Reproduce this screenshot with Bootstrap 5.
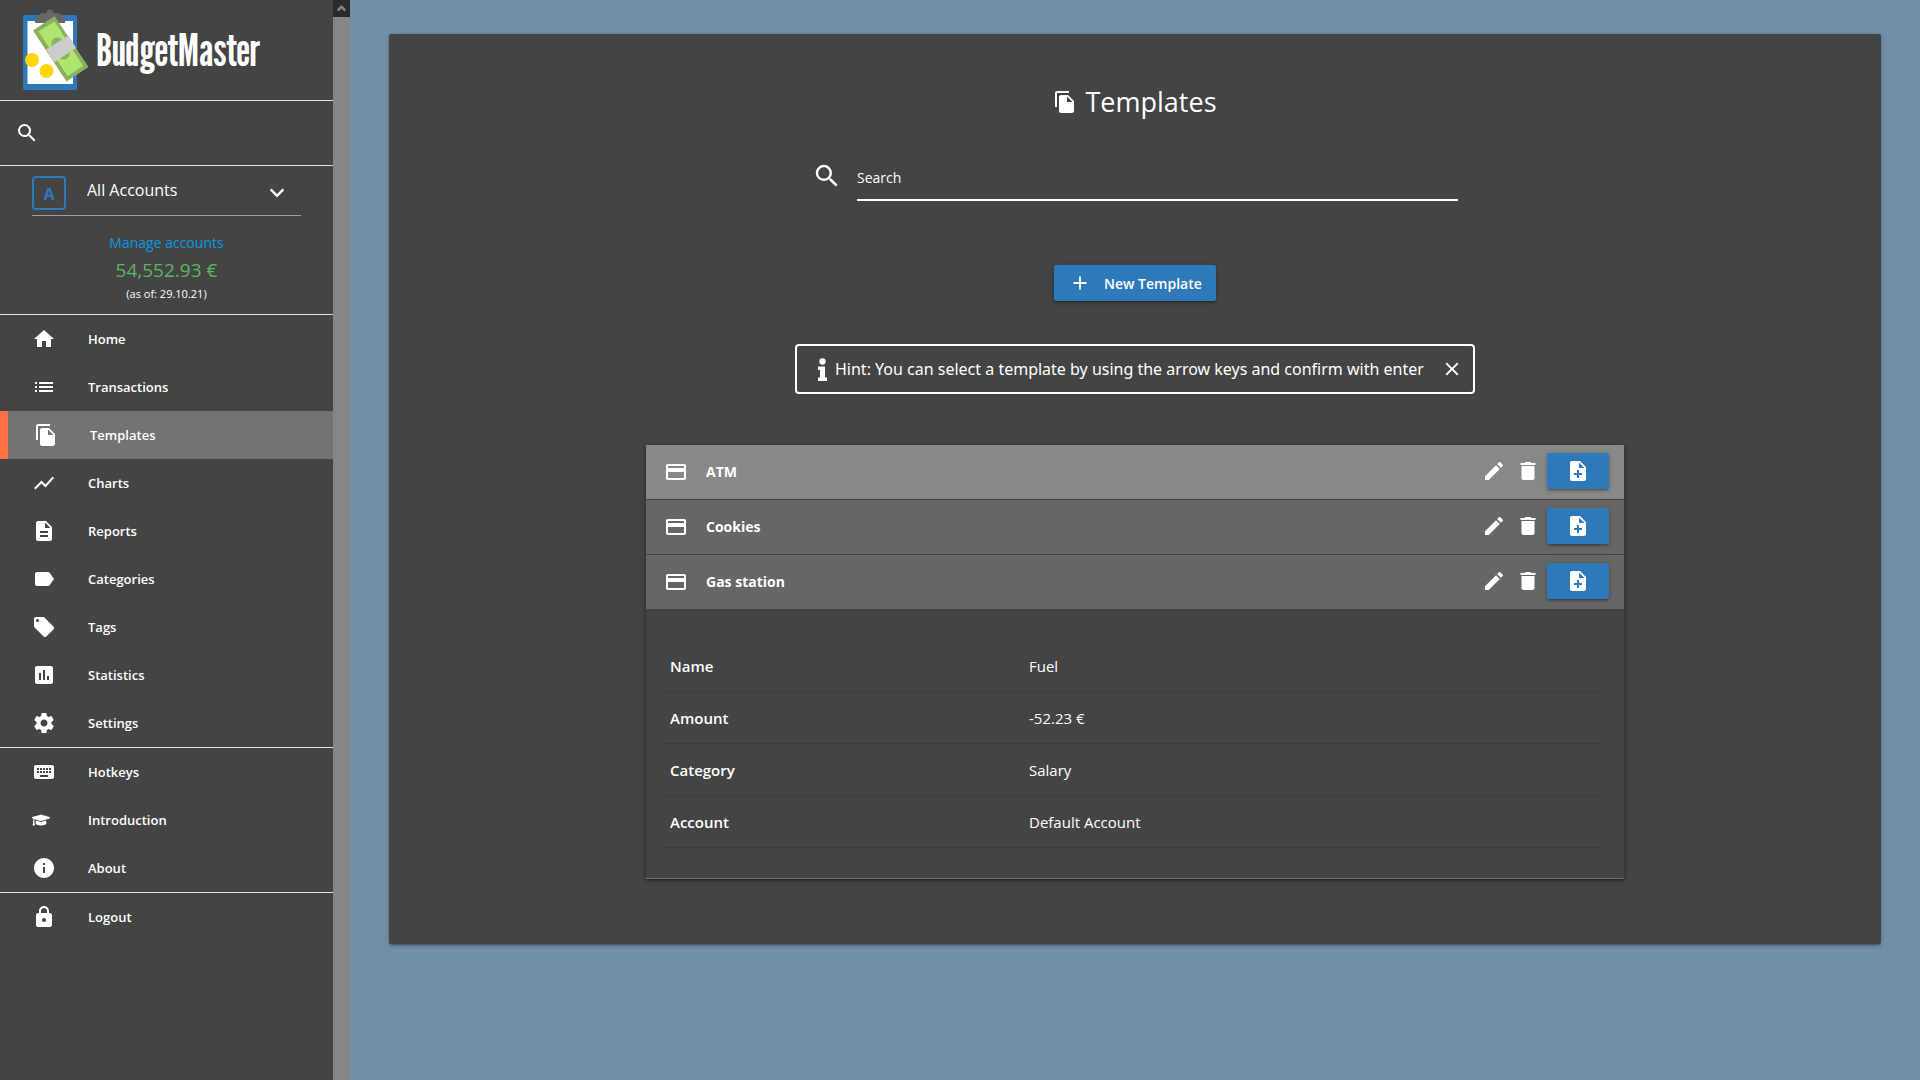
<!DOCTYPE html>
<html lang="en">
<head>
<meta charset="utf-8">
<meta name="viewport" content="width=device-width, initial-scale=1">
<title>BudgetMaster - Templates</title>
<link href="https://cdn.jsdelivr.net/npm/bootstrap@5.3.0/dist/css/bootstrap.min.css" rel="stylesheet">
<style>
:root{--bm-dark:#444;--bm-blue:#2e79b9;--bm-line:#e0e0e0}
body{background:#728fa8;color:#fff;font-family:"Open Sans","Noto Sans",sans-serif;font-size:14px;line-height:20px}
svg{display:block;flex:none;fill:currentColor}
.icon{width:24px;height:24px}
.sidebar{width:350px;background:var(--bm-dark)}
.sidebar-body{min-width:0}
.scroll-track{width:17px;background:#868686}
.scroll-up{height:17px;background:#2b2b2b;color:#868686}
.line-below{border-bottom:1px solid var(--bm-line)}
.brand{height:101px;padding-left:20px;color:#fff}
.brand-logo{width:72px;height:84px}
.brand-name{font-family:"League Gothic","Open Sans Condensed","Roboto Condensed","Liberation Sans Narrow","Liberation Sans",sans-serif;font-size:44px;font-weight:400;line-height:48px}
.quick-search{height:65px;padding:0 16px 0 15px}
.plain-input{background:transparent;border:0;color:#fff;outline:0;border-radius:0}
.account{height:149px;padding:10px 32px 0}
.account-select{height:40px;border-bottom:1px solid #9e9e9e;padding-right:12px}
.account-letter{width:34px;height:34px;border:2px solid var(--bm-blue);border-radius:4px;color:var(--bm-blue);font-size:16px;font-weight:700;padding-top:2px}
.account-select select{appearance:none;font-size:16px;padding:0;margin-left:21px}
.account-select .icon{margin-top:5px}
.account-link{color:#039be5;margin-top:17px}
.account-sum{color:#5cb860;font-size:19px;line-height:28px;margin-top:3px}
.account-date{font-size:11px;line-height:16px;margin-top:2px}
.nav-side a{height:48px;padding-left:32px;color:#fff;font-size:13px;font-weight:600;text-decoration:none;gap:32px}
.nav-side a:hover{background:#555}
.nav-side a.current{background:#737373;border-left:8px solid #ff7043;padding-left:26px}
.nav-side .cap{width:18px;height:18px;margin-right:6px}
.panel{width:95%;background:var(--bm-dark);border-radius:2px;box-shadow:0 2px 2px rgba(0,0,0,.14),0 3px 1px -2px rgba(0,0,0,.12),0 1px 5px rgba(0,0,0,.2);margin-top:34px;padding:48px 0 65px}
.panel h1{font-size:27px;line-height:40px;font-weight:400;gap:8px;margin-bottom:32px}
.search-box{width:646px;gap:15px;margin-bottom:64px;height:47px}
.search-box svg{width:30px;height:30px;margin-top:7px}
.search-box .plain-input{height:47px;border-bottom:2px solid #fff;padding:2px 0 0;font-size:14px}
.plain-input::placeholder{color:#fff;opacity:1}
.btn-bm{background:var(--bm-blue);color:#fff;border:0;border-radius:2px;height:36px;box-shadow:0 2px 2px rgba(0,0,0,.14),0 3px 1px -2px rgba(0,0,0,.12),0 1px 5px rgba(0,0,0,.2)}
.btn-bm:hover{background:#3d8acb;color:#fff}
.btn-new{font-size:14px;font-weight:600;padding:0 15px;gap:13px;width:162px}
.btn-new svg{width:22px;height:22px}
.hint{border:2px solid #fff;border-radius:4px;height:50px;font-family:"Noto Sans",sans-serif;font-size:16px;width:680px;margin-top:43px;margin-bottom:51px;padding:0 10px 0 21px}
.hint-info{width:9px;height:23px}
.btn-plain{background:none;border:0;padding:0;color:#fff}
.template-list{width:978px;box-shadow:0 2px 2px rgba(0,0,0,.14),0 3px 1px -2px rgba(0,0,0,.12),0 1px 5px rgba(0,0,0,.4);border-bottom:1px solid #707070}
.template-head{background:#666;height:54px;padding:0 15px 0 18px;gap:18px;font-size:14px;font-weight:700}
.template-head.selected{background:#888}
.template-head + .template-head{margin-top:1px}
.template-head .actions{gap:10px;padding-bottom:2px}
.template-head .btn-bm{width:62px;margin-left:-3px}
.detail{padding:30px 19px}
.detail table{font-size:15px;color:#fff}
.detail th,.detail td{height:52px;padding:2px 5px 0;border-bottom:1px solid #3c3c3c;vertical-align:middle;text-align:left}
.detail th{width:359px;font-weight:600}
</style>
</head>
<body>
<svg class="d-none" aria-hidden="true">
<symbol id="i-search" viewBox="0 0 24 24"><path d="M15.5 14h-.79l-.28-.27A6.47 6.47 0 0 0 16 9.5 6.5 6.5 0 1 0 9.5 16c1.61 0 3.09-.59 4.23-1.57l.27.28v.79l5 4.99L20.49 19l-4.99-5zm-6 0C7.01 14 5 11.99 5 9.5S7.01 5 9.5 5 14 7.01 14 9.5 11.99 14 9.5 14z"/></symbol>
<symbol id="i-copy" viewBox="0 0 24 24"><path d="M16 1H4c-1.1 0-2 .9-2 2v14h2V3h12V1zm-1 4l6 6v10c0 1.1-.9 2-2 2H7.99C6.89 23 6 22.1 6 21V7c0-1.1.89-2 1.99-2H15zm-1 7h5.500L14 6.500V12z"/></symbol>
<symbol id="i-card" viewBox="0 0 24 24"><path d="M20 4H4c-1.11 0-1.99.89-1.990 2L2 18c0 1.110.89 2 2 2h16c1.110 0 2-.89 2-2V6c0-1.110-.89-2-2-2zm0 14H4v-6h16v6zm0-10H4V6h16v2z"/></symbol>
<symbol id="i-edit" viewBox="0 0 24 24"><path d="M3 17.250V21h3.750L17.810 9.940l-3.750-3.750L3 17.250zM20.710 7.040c.39-.39.39-1.020 0-1.410l-2.340-2.340c-.39-.39-1.020-.39-1.410 0l-1.830 1.830 3.750 3.750 1.830-1.830z"/></symbol>
<symbol id="i-trash" viewBox="0 0 24 24"><path d="M5.500 19c0 1.100.9 2 2 2h9c1.100 0 2-.9 2-2V7h-13v12zM19.500 4h-4l-1-1h-5l-1 1h-4v2h15V4z"/></symbol>
<symbol id="i-add-file" viewBox="0 0 24 24"><path fill-rule="evenodd" d="M14 2H6c-1.100 0-1.990.9-1.990 2L4 20c0 1.100.89 2 1.990 2H18c1.100 0 2-.9 2-2V8l-6-6zm2 14h-3v3h-2v-3H8v-2h3v-3h2v3h3v2zm-3-7V3.500L18.500 9H13z"/></symbol>
</svg>
<div class="d-flex min-vh-100">
<aside class="sidebar d-flex flex-shrink-0">
<div class="sidebar-body flex-grow-1">
<a href="#" class="brand line-below d-flex align-items-center text-decoration-none">
<svg class="brand-logo" viewBox="20 8 72 84" aria-hidden="true">
<rect x="23" y="15" width="54" height="75" rx="2" fill="#2e79b9"/><path fill="#fff" d="M27.500 21h45.500v63H27.500z"/>
<path fill="#666" d="M35 23v-2c1-4 4-7 8-8h3.500a3.500 3.500 0 0 1 7 0H57c4 1 7 4 8 8v2z"/>
<path fill="#8bb05c" d="M54.500 16 33 30.500 66.500 81.500 88.500 67z"/><path fill="#aee571" d="M54.500 21.500 38.500 31.500 67.500 76 83 66z"/>
<ellipse cx="60.500" cy="48.500" rx="7.500" ry="12" fill="#8bb05c" transform="rotate(-33 60.500 48.500)"/>
<path fill="#ccc" d="M46 49.500 68.500 35.500 76 48 54 62.500z"/>
<circle cx="32" cy="60" r="7" fill="#ffd60a"/><circle cx="46.500" cy="71" r="7" fill="#ffd60a"/>
</svg>
<span class="brand-name ms-1">BudgetMaster</span></a>
<form class="quick-search line-below d-flex align-items-center"><label for="quick"><svg class="icon" role="img" aria-label="Search transactions"><use href="#i-search"/></svg></label><input id="quick" type="search" class="plain-input flex-grow-1"></form>
<section class="account line-below text-center">
<div class="account-select d-flex">
<label for="acc" class="account-letter d-flex align-items-center justify-content-center">A</label>
<select id="acc" class="plain-input flex-grow-1 mb-2 pb-1"><option>All Accounts</option></select>
<svg class="icon" viewBox="0 0 24 24" aria-hidden="true"><path d="M6.500 7.500 12 13 17.500 7.500 19.200 9.200 12 16.500 4.800 9.200z"/></svg>
</div>
<a href="#" class="account-link d-block text-decoration-none">Manage accounts</a>
<div class="account-sum">54,552.93 €</div>
<div class="account-date">(as of: 29.10.21)</div>
</section>
<nav class="nav-side">
<div class="line-below">
<a href="#" class="d-flex align-items-center"><svg class="icon" viewBox="0 0 24 24"><path d="M10 20v-6h4v6h5v-8h3L12 3 2 12h3v8z"/></svg>Home</a>
<a href="#" class="d-flex align-items-center"><svg class="icon" viewBox="0 0 24 24"><path d="M3 13h2v-2H3v2zm0 4h2v-2H3v2zm0-8h2V7H3v2zm4 4h14v-2H7v2zm0 4h14v-2H7v2zM7 7v2h14V7H7z"/></svg>Transactions</a>
<a href="#" class="current d-flex align-items-center" aria-current="page"><svg class="icon"><use href="#i-copy"/></svg>Templates</a>
<a href="#" class="d-flex align-items-center"><svg class="icon" viewBox="0 0 24 24"><path d="M3.500 18.490l6-6.010 4 4L22 6.920l-1.410-1.410-7.090 7.970-4-4L2 16.990z"/></svg>Charts</a>
<a href="#" class="d-flex align-items-center"><svg class="icon" viewBox="0 0 24 24"><path fill-rule="evenodd" d="M14 2H6c-1.100 0-1.990.9-1.990 2L4 20c0 1.100.89 2 1.990 2H18c1.100 0 2-.9 2-2V8l-6-6zm2 16H8v-2h8v2zm0-4H8v-2h8v2zm-3-5V3.500L18.500 9H13z"/></svg>Reports</a>
<a href="#" class="d-flex align-items-center"><svg class="icon" viewBox="0 0 24 24"><path d="M17.630 5.840C17.270 5.330 16.670 5 16 5L5 5.010C3.900 5.010 3 5.900 3 7v10c0 1.100.9 1.990 2 1.990L16 19c.67 0 1.270-.33 1.630-.84L22 12l-4.370-6.160z"/></svg>Categories</a>
<a href="#" class="d-flex align-items-center"><svg class="icon" viewBox="0 0 24 24"><path fill-rule="evenodd" d="M21.410 11.580l-9-9C12.050 2.220 11.550 2 11 2H4c-1.100 0-2 .9-2 2v7c0 .55.22 1.050.59 1.420l9 9c.36.36.86.58 1.410.58s1.050-.22 1.410-.59l7-7c.37-.36.59-.86.59-1.410s-.23-1.060-.59-1.420zM5.500 7C4.670 7 4 6.330 4 5.500S4.670 4 5.500 4 7 4.670 7 5.500 6.330 7 5.500 7z"/></svg>Tags</a>
<a href="#" class="d-flex align-items-center"><svg class="icon" viewBox="0 0 24 24"><path fill-rule="evenodd" d="M19 3H5c-1.100 0-2 .9-2 2v14c0 1.100.9 2 2 2h14c1.100 0 2-.9 2-2V5c0-1.100-.9-2-2-2zM9 17H7v-7h2v7zm4 0h-2V7h2v10zm4 0h-2v-4h2v4z"/></svg>Statistics</a>
<a href="#" class="d-flex align-items-center"><svg class="icon" viewBox="0 0 24 24"><path fill-rule="evenodd" d="M19.430 12.980c.04-.32.07-.64.07-.98s-.03-.66-.07-.98l2.110-1.650c.19-.15.24-.42.12-.64l-2-3.460c-.12-.22-.39-.3-.61-.22l-2.490 1c-.52-.4-1.080-.73-1.690-.98l-.38-2.650C14.460 2.180 14.250 2 14 2h-4c-.25 0-.46.18-.49.42l-.38 2.650c-.61.25-1.170.59-1.690.98l-2.490-1c-.23-.09-.49 0-.61.22l-2 3.460c-.13.22-.07.49.12.64l2.110 1.650c-.04.32-.07.65-.07.98s.03.66.07.98l-2.110 1.650c-.19.15-.24.42-.12.64l2 3.460c.12.22.39.3.61.22l2.490-1c.52.4 1.080.73 1.690.98l.38 2.650c.03.24.24.42.49.42h4c.25 0 .46-.18.49-.42l.38-2.650c.61-.25 1.170-.59 1.690-.98l2.490 1c.23.09.49 0 .61-.22l2-3.460c.12-.22.07-.49-.12-.64l-2.110-1.650zM12 15.500c-1.930 0-3.500-1.570-3.500-3.500s1.570-3.500 3.500-3.500 3.500 1.570 3.500 3.500-1.570 3.500-3.500 3.500z"/></svg>Settings</a>
</div>
<div class="line-below">
<a href="#" class="d-flex align-items-center"><svg class="icon" viewBox="0 0 24 24"><path fill-rule="evenodd" d="M20 5H4c-1.100 0-1.990.9-1.990 2L2 17c0 1.100.9 2 2 2h16c1.100 0 2-.9 2-2V7c0-1.100-.9-2-2-2zm-9 3h2v2h-2V8zm0 3h2v2h-2v-2zM8 8h2v2H8V8zm0 3h2v2H8v-2zm-1 2H5v-2h2v2zm0-3H5V8h2v2zm9 7H8v-2h8v2zm0-4h-2v-2h2v2zm0-3h-2V8h2v2zm3 3h-2v-2h2v2zm0-3h-2V8h2v2z"/></svg>Hotkeys</a>
<a href="#" class="d-flex align-items-center"><svg class="cap" viewBox="0 0 640 512"><path d="M622 153 343 67c-15-4-31-4-46 0L18 153c-24 7-24 40 0 48l49 15c-11 13-17 29-18 46-10 6-17 16-17 29 0 11 6 21 14 27L20 432c-2 10 6 19 16 19h56c10 0 18-9 16-19L82 318c8-6 14-16 14-27 0-12-7-22-16-28 1-13 7-25 19-33l198 61c9 3 26 6 46 0l279-85c24-8 24-41 0-48zM353 321c-31 10-56 4-66 0l-145-44-14 107c0 35 86 64 192 64s192-29 192-64l-14-107z"/></svg>Introduction</a>
<a href="#" class="d-flex align-items-center"><svg class="icon" viewBox="0 0 24 24"><path fill-rule="evenodd" d="M12 2C6.480 2 2 6.480 2 12s4.480 10 10 10 10-4.480 10-10S17.520 2 12 2zm1 15h-2v-6h2v6zm0-8h-2V7h2v2z"/></svg>About</a>
</div>
<a href="#" class="d-flex align-items-center"><svg class="icon" viewBox="0 0 24 24"><path fill-rule="evenodd" d="M18 8h-1V6c0-2.760-2.240-5-5-5S7 3.240 7 6v2H6c-1.100 0-2 .9-2 2v10c0 1.100.9 2 2 2h12c1.100 0 2-.9 2-2V10c0-1.100-.9-2-2-2zm-6 9c-1.100 0-2-.9-2-2s.9-2 2-2 2 .9 2 2-.9 2-2 2zm3.100-9H8.900V6c0-1.710 1.390-3.100 3.100-3.100s3.100 1.390 3.100 3.100v2z"/></svg>Logout</a>
</nav>
</div>
<div class="scroll-track flex-shrink-0" aria-hidden="true"><div class="scroll-up d-flex align-items-center justify-content-center"><svg width="9" height="7" viewBox="0 0 9 7"><path d="M4.500 0 9 4.500 7.500 6.500 4.500 3.500 1.500 6.500 0 4.500z"/></svg></div></div>
</aside>
<main class="flex-grow-1">
<div class="panel mx-auto d-flex flex-column align-items-center">
<h1 class="d-flex align-items-center"><svg class="icon"><use href="#i-copy"/></svg>Templates</h1>
<form class="search-box d-flex"><label for="search"><svg role="img" aria-label="Search templates"><use href="#i-search"/></svg></label><input id="search" type="text" class="plain-input flex-grow-1" placeholder="Search"></form>
<button type="button" class="btn btn-bm btn-new d-flex align-items-center text-nowrap"><svg viewBox="0 0 24 24"><path d="M19 13h-6v6h-2v-6H5v-2h6V5h2v6h6v2z"/></svg>New Template</button>
<div class="hint d-flex align-items-center" role="note">
<svg class="hint-info me-2" viewBox="0 0 9 23"><path d="M0 8.500h7V19.500H9V23H0V19.500H2V12H0z"/><circle cx="4.500" cy="3.500" r="3.200"/></svg>
<span class="flex-grow-1 text-nowrap">Hint: You can select a template by using the arrow keys and confirm with enter</span>
<button type="button" class="btn-plain" aria-label="Close"><svg width="22" height="22" viewBox="0 0 24 24"><path d="M19 6.410 17.590 5 12 10.590 6.410 5 5 6.410 10.590 12 5 17.590 6.410 19 12 13.410 17.590 19 19 17.590 13.410 12z"/></svg></button>
</div>
<section class="template-list">
<div class="template-head selected d-flex align-items-center"><svg class="icon"><use href="#i-card"/></svg><span class="flex-grow-1">ATM</span>
<div class="actions d-flex align-items-center"><button class="btn-plain" aria-label="Edit"><svg class="icon"><use href="#i-edit"/></svg></button><button class="btn-plain" aria-label="Delete"><svg class="icon"><use href="#i-trash"/></svg></button><button class="btn btn-bm d-flex align-items-center justify-content-center" aria-label="Use template"><svg class="icon"><use href="#i-add-file"/></svg></button></div></div>
<div class="template-head d-flex align-items-center"><svg class="icon"><use href="#i-card"/></svg><span class="flex-grow-1">Cookies</span>
<div class="actions d-flex align-items-center"><button class="btn-plain" aria-label="Edit"><svg class="icon"><use href="#i-edit"/></svg></button><button class="btn-plain" aria-label="Delete"><svg class="icon"><use href="#i-trash"/></svg></button><button class="btn btn-bm d-flex align-items-center justify-content-center" aria-label="Use template"><svg class="icon"><use href="#i-add-file"/></svg></button></div></div>
<div class="template-head d-flex align-items-center"><svg class="icon"><use href="#i-card"/></svg><span class="flex-grow-1">Gas station</span>
<div class="actions d-flex align-items-center"><button class="btn-plain" aria-label="Edit"><svg class="icon"><use href="#i-edit"/></svg></button><button class="btn-plain" aria-label="Delete"><svg class="icon"><use href="#i-trash"/></svg></button><button class="btn btn-bm d-flex align-items-center justify-content-center" aria-label="Use template"><svg class="icon"><use href="#i-add-file"/></svg></button></div></div>
<div class="detail"><table class="w-100"><tbody>
<tr><th scope="row">Name</th><td>Fuel</td></tr>
<tr><th scope="row">Amount</th><td>-52.23 €</td></tr>
<tr><th scope="row">Category</th><td>Salary</td></tr>
<tr><th scope="row">Account</th><td>Default Account</td></tr>
</tbody></table></div>
</section>
</div>
</main>
</div>
<script src="https://cdn.jsdelivr.net/npm/bootstrap@5.3.0/dist/js/bootstrap.bundle.min.js"></script>
</body>
</html>
